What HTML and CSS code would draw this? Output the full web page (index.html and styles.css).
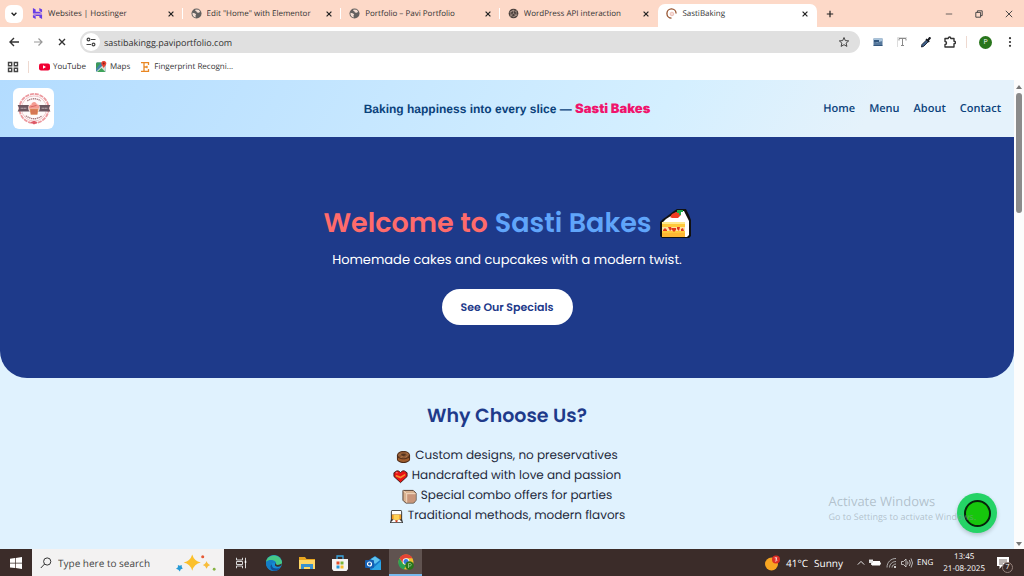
FILE: index.html
```html
<!DOCTYPE html>
<html lang="en">
<head>
    <meta charset="UTF-8">
    <meta name="viewport" content="width=device-width, initial-scale=1.0">
    <title>SastiBaking</title>
    <link rel="stylesheet" href="styles.css">
</head>
<body>
    <!-- Shared icon shapes -->
    <svg class="sprite" aria-hidden="true">
        <symbol id="close" viewBox="0 0 10 10"><path d="M2 2l6 6M8 2L2 8" fill="none" stroke="currentColor" stroke-width="1.5"/></symbol>
        <symbol id="globe" viewBox="0 0 12 12"><circle cx="6" cy="6" r="5.5" fill="#63605f"/><path d="M1.6 5.2L4 5.6l1.6 1.3-.7 1.2.3 2.3C2.7 9.9 1.3 8 1.6 5.2zM5 1.6l3.4.4L10 4 8.6 5.300 6.500 4.800 5.800 3.500 4.500 3z" fill="#f3ddd3"/></symbol>
    </svg>

    <!-- Tab strip -->
    <div class="tab-strip">
        <button class="tab-search" aria-label="Search tabs"><svg class="icon-s" viewBox="0 0 10 10"><path d="M2 3.500l3 3 3-3" fill="none" stroke="#222" stroke-width="1.700"/></svg></button>
        <div class="tabs">
            <div class="tab">
                <svg class="favicon" viewBox="0 0 12 12"><path d="M1 0l3 1.600v2.600h4L11 6H1zM8 0l3 1.600V5L8 3.400zM1 7h10v5L8 10.400V8.800H4.500zM1 7.500l3 1.600V12l-3-1.600z" fill="#673de6"/></svg>
                <span class="tab-title">Websites | Hostinger</span>
                <button class="tab-close" aria-label="Close tab"><svg class="icon-s"><use href="#close"/></svg></button>
            </div>
            <div class="tab">
                <svg class="favicon"><use href="#globe"/></svg>
                <span class="tab-title">Edit "Home" with Elementor</span>
                <button class="tab-close" aria-label="Close tab"><svg class="icon-s"><use href="#close"/></svg></button>
            </div>
            <div class="tab">
                <svg class="favicon"><use href="#globe"/></svg>
                <span class="tab-title">Portfolio – Pavi Portfolio</span>
                <button class="tab-close" aria-label="Close tab"><svg class="icon-s"><use href="#close"/></svg></button>
            </div>
            <div class="tab">
                <svg class="favicon" viewBox="0 0 12 12"><circle cx="6" cy="6" r="5.300" fill="#4a403c"/><g fill="none" stroke="#d9bfb3" stroke-width=".5"><path d="M6 2.500l3 1.700v3.600L6 9.500 3 7.800V4.200z"/><path d="M6 2.500V6l3 1.800M3 7.800L6 6M1.500 4.500L6 2.500M10.500 7.500L6 9.500M9 1.800v2.400M3 10.200V7.800"/></g></svg>
                <span class="tab-title">WordPress API interaction</span>
                <button class="tab-close" aria-label="Close tab"><svg class="icon-s"><use href="#close"/></svg></button>
            </div>
            <div class="tab active">
                <svg class="favicon" viewBox="0 0 12 12"><path d="M6 11A5 5 0 1 1 11 6" fill="none" stroke="#94502b" stroke-width="1.400"/><circle cx="6.500" cy="6.500" r="2" fill="#f6dcd6" stroke="#e5a79c" stroke-width=".7"/></svg>
                <span class="tab-title">SastiBaking</span>
                <button class="tab-close" aria-label="Close tab"><svg class="icon-s"><use href="#close"/></svg></button>
            </div>
        </div>
        <button class="new-tab" aria-label="New tab"><svg class="icon-s" viewBox="0 0 10 10"><path d="M5 1v8M1 5h8" stroke="#222" stroke-width="1.500"/></svg></button>
        <div class="window-controls">
            <button aria-label="Minimize"><svg class="icon-s" viewBox="0 0 10 10"><path d="M1 5h8" stroke="#444" stroke-width="1"/></svg></button>
            <button aria-label="Restore"><svg class="icon-s" viewBox="0 0 10 10"><path d="M1 3h6v6H1zM3 3V1h6v6H7" fill="none" stroke="#444" stroke-width="1.200"/></svg></button>
            <button aria-label="Close window"><svg class="icon-s" viewBox="0 0 10 10"><path d="M1 1l8 8M9 1L1 9" stroke="#444" stroke-width="1.200"/></svg></button>
        </div>
    </div>

    <!-- Toolbar -->
    <div class="toolbar">
        <button aria-label="Back"><svg class="icon-m" viewBox="0 0 12 12"><path d="M11 6H2M6 2L2 6l4 4" fill="none" stroke="#333" stroke-width="1.400"/></svg></button>
        <button aria-label="Forward"><svg class="icon-m" viewBox="0 0 12 12"><path d="M2 6h8M6.500 2.500L10 6 6.500 9.500" fill="none" stroke="#999" stroke-width="1.200"/></svg></button>
        <button aria-label="Stop loading"><svg class="icon-m" viewBox="0 0 12 12"><path d="M3 3l6 6M9 3L3 9" stroke="#333" stroke-width="1.400"/></svg></button>
        <div class="address-bar">
            <button class="site-info" aria-label="Site information"><svg class="icon-m" viewBox="0 0 12 12"><g fill="none" stroke="#444" stroke-width="1.200"><circle cx="3.500" cy="3.500" r="1.400"/><path d="M6 3.500h4.500M1.500 8.500H6"/><circle cx="8.500" cy="8.500" r="1.400"/></g></svg></button>
            <input class="url" type="text" value="sastibakingg.paviportfolio.com" aria-label="Address">
            <button class="star" aria-label="Bookmark this page"><svg class="icon-m" viewBox="0 0 12 12"><path d="M6 1.500l1.300 3.100 3.400.3-2.600 2.200.8 3.300L6 8.700l-2.900 1.700.8-3.300L1.300 4.900l3.400-.3z" fill="none" stroke="#444" stroke-width="1"/></svg></button>
        </div>
        <div class="extensions">
            <button aria-label="Screenshot extension"><svg class="icon-m" viewBox="0 0 12 12"><path d="M1.500 2.500h9v7h-9z" fill="#56789c"/><path d="M1.500 2.500h9V5L5 6.500 1.500 5z" fill="#a9c4dc"/><path d="M2 4h5v2H2zM1.500 9h9v1h-9z" fill="#33567d"/></svg></button>
            <button aria-label="Text extension"><svg class="icon-m" viewBox="0 0 12 12"><path d="M1.500 11V1.500H11" fill="none" stroke="#ddd"/><path d="M3 4.500v-2h7v2M6.500 2.500v7M5 9.500h3" fill="none" stroke="#8a8a8a"/></svg></button>
            <button aria-label="Color picker"><svg class="icon-m" viewBox="0 0 12 12"><path d="M1.500 11l.5-2.500 4.500-4.500 1.700 1.700L3.700 10.300z" fill="#3f628d" stroke="#1c2536"/><path d="M5.500 3.500l1-1 1 .7L9 1.200c1-.9 2.500.4 1.700 1.500L9 4.500l.7 1-1 1z" fill="#16191f"/></svg></button>
            <button aria-label="Extensions"><svg class="icon-m" viewBox="0 0 12 12"><path d="M1 2.500h3.200c0-2 2.600-2 2.600 0H10V5.200c2 0 2 2.600 0 2.600V11H1V8.500c2 0 2-3 0-3z" fill="none" stroke="#333" stroke-width="1.400" stroke-linejoin="round"/></svg></button>
        </div>
        <button class="profile" aria-label="Profile">P</button>
        <button aria-label="Browser menu"><svg class="icon-m" viewBox="0 0 12 12"><g fill="#333"><circle cx="6" cy="2.200" r="1.100"/><circle cx="6" cy="6" r="1.100"/><circle cx="6" cy="9.800" r="1.100"/></g></svg></button>
    </div>

    <!-- Bookmarks -->
    <div class="bookmarks">
        <button class="apps" aria-label="Apps"><svg class="icon-m" viewBox="0 0 12 12"><path d="M1.500 1.500h3.200v3.200H1.500zM7.300 1.500h3.200v3.200H7.300zM1.500 7.300h3.200v3.200H1.500zM7.300 7.300h3.200v3.200H7.300z" fill="none" stroke="#444" stroke-width="1.400"/></svg></button>
        <a href="#"><svg class="icon-m" viewBox="0 0 12 12"><rect x="1" y="2.500" width="11" height="7" rx="2" fill="#f00033"/><path d="M5 4.300v3.400L8 6z" fill="#fff"/></svg>YouTube</a>
        <a href="#"><svg class="icon-m" viewBox="0 0 12 12"><rect x="1" y="1.500" width="9.500" height="9.500" rx="1" fill="#4285a8"/><path d="M1 2.500l1-1h4L1 8z" fill="#3c9b57"/><path d="M1 11l8-8 1.500 2.500V10l-1 1z" fill="#d8ddd5"/><path d="M2 11l4.500-4 4 4z" fill="#3fa45b"/><path d="M8.700 0C6.600 0 5.600 2 6.600 3.800L8.700 7l2.200-3.200C12 2 10.800 0 8.700 0z" fill="#e94335"/><circle cx="8.700" cy="2.600" r="1" fill="#8d1c19"/></svg>Maps</a>
        <a href="#"><svg class="icon-m" viewBox="0 0 12 12"><path d="M2 1.700h7.500V4M5 1.700v8.600M2 10.300h7.500V8M5 6h3M8 4.700v2.600" fill="none" stroke="#e98723" stroke-width="1.300"/></svg>Fingerprint Recogni...</a>
    </div>

    <!-- Website -->
    <div class="viewport">
        <div class="page">
            <header class="site-header">
                <svg class="logo" viewBox="0 0 40 40" role="img" aria-label="Sasti Bakes logo">
                    <rect width="40" height="40" rx="6" fill="#fff"/>
                    <circle cx="20.500" cy="20" r="14.200" fill="none" stroke="#ec9a9f" stroke-width="1.800" stroke-dasharray="4 .8"/>
                    <circle cx="20.500" cy="20" r="12.300" fill="#fffafa" stroke="#e3a0a6" stroke-width=".6"/>
                    <path d="M14 12.500q6.500-4 13 0M12.500 27q8 6 16 0" fill="none" stroke="#a5787d" stroke-width="1.300" stroke-dasharray="1.300 .6"/>
                    <path d="M4.500 16.500h32l-1.500 3.300 1.500 3.200h-32L6 19.800z" fill="#6c5660"/>
                    <path d="M7.500 19.800h6M28 19.800h6" stroke="#d5c5c8" stroke-width="1" stroke-dasharray="1 .5"/>
                    <circle cx="20.500" cy="19.500" r="5.700" fill="#fff1eb"/>
                    <path d="M16 20h9l-1.200 6h-6.500z" fill="#de8c59"/>
                    <path d="M15.500 20c-.7-2.500 1.500-3.500 2.500-3.600.2-3.700 5-3.700 5.200-.2 2.200 0 3.300 2 2.300 3.900z" fill="#f59b91"/>
                    <path d="M17 18.500l6-1.500M18.500 21v4.500M20.500 21v4.500M22.500 21v4.500" stroke="#c9534c" stroke-width=".7"/>
                    <path d="M17 33.500l3.500-1.500 3.500 1.500-3.500 2z" fill="#dd5967"/>
                </svg>
                <div class="tagline">Baking happiness into every slice — <span class="brand">Sasti Bakes</span></div>
                <nav class="site-nav">
                    <a href="#">Home</a>
                    <a href="#">Menu</a>
                    <a href="#">About</a>
                    <a href="#">Contact</a>
                </nav>
            </header>

            <section class="hero">
                <h1><span class="welcome">Welcome to</span> <span class="name">Sasti Bakes</span>
                    <svg class="cake" viewBox="0 0 32 32" aria-hidden="true">
                        <path d="M1 14l3-3 3-2 4-3 4-3 3-2h9l3 6 2 5v16l-2 2H3l-2-2z" fill="#111"/>
                        <path d="M3 15l4-4 8-5 4-3h6l3 6 2 4v14l-2 2H3z" fill="#fff"/>
                        <path d="M3 15h23v14H3z" fill="#ffc93a"/>
                        <path d="M3 14h23v2H3z" fill="#ffe98c"/>
                        <path d="M3 19h23v4H3z" fill="#ffe3a0"/>
                        <path d="M4 22l2-2 2 2v1H4zM9 19h3l1 2-2 2zM13 20h4v2l-2 2-2-2zM18 19h3l-1 4-2-2zM22 21l2-1 1 3h-3z" fill="#e3381d"/>
                        <path d="M3 25h23v4H3z" fill="#ffb733"/>
                        <path d="M11 9l2-3 4-2h3l2 3-3 3h-6z" fill="#ef3b20"/>
                        <path d="M18 2h6v2h-2v3h-2V5h-2z" fill="#22a848"/>
                    </svg>
                </h1>
                <p>Homemade cakes and cupcakes with a modern twist.</p>
                <button class="specials">See Our Specials</button>
            </section>

            <section class="why">
                <h2>Why Choose Us?</h2>
                <ul>
                    <li><svg class="emoji" viewBox="0 0 16 16" aria-hidden="true"><path d="M1 7c0-3 3-5 7-5s7 2 7 5v4c0 2-3 4-7 4s-7-2-7-4z" fill="#4d2b17"/><path d="M2 9c3 2.500 9 2.500 12 0v2.500c-2 3-10 3-12 0z" fill="#9f5d2e"/><ellipse cx="8" cy="6.500" rx="6" ry="3.500" fill="#8c5733"/><ellipse cx="8" cy="6.200" rx="2.500" ry="1.200" fill="#54351f"/><path d="M3 7l2-2M11 4l2 2M5 9l2-1M10 9l2-2" stroke="#c08d55" stroke-width=".8"/></svg>Custom designs, no preservatives</li>
                    <li><svg class="emoji" viewBox="0 0 16 16" aria-hidden="true"><path d="M8 14.500L1 8V4l3-2h2l2 2 2-2h2l3 2v4z" fill="#e91313" stroke="#391713"/><path d="M3 6l5 2 5-3v2l-5 3-5-2z" fill="#f58a2a"/><path d="M3 4h2" stroke="#ff9391"/></svg>Handcrafted with love and passion</li>
                    <li><svg class="emoji" viewBox="0 0 16 16" aria-hidden="true"><path d="M1 1.500h11l3 3V12l-2.500 3H4l-3-3z" fill="#d9b391" stroke="#503c2e"/><path d="M5 5h9.500v7l-2.500 2.500H5z" fill="#c9967a"/><path d="M1.500 2l3.500 3h9.500M5 5v9.500" fill="none" stroke="#f3dcc4"/></svg>Special combo offers for parties</li>
                    <li><svg class="emoji" viewBox="0 0 16 16" aria-hidden="true"><path d="M3 1h10l1 2v8l1 4H1l1-4V3z" fill="#333"/><path d="M3 2h10v4H3z" fill="#fff"/><path d="M3 6h10v5H3z" fill="#ef9b26"/><path d="M5 6h6v5l-3 2-3-2z" fill="#ffd255"/><path d="M2 14l3-3 3 2 3-2 3 3z" fill="#fff"/><path d="M7 12h2v2H7z" fill="#d33b26"/></svg>Traditional methods, modern flavors</li>
                </ul>
            </section>

            <button class="chat" aria-label="Chat with us"></button>
        </div>
        <div class="scrollbar">
            <span class="arrow up"></span>
            <span class="thumb"></span>
            <span class="arrow down"></span>
        </div>
        <div class="watermark">
            <div class="watermark-title">Activate Windows</div>
            <div>Go to Settings to activate Windows.</div>
        </div>
    </div>

    <!-- Taskbar -->
    <div class="taskbar">
        <button class="start" aria-label="Start"><svg class="icon-m" viewBox="0 0 12 12"><path d="M0 1.700L5 1v4.700H0zM5.700.9L12 0v5.700H5.700zM0 6.400h5v4.700l-5-.7zM5.700 6.400H12V12l-6.300-.9z" fill="#fff"/></svg></button>
        <label class="search">
            <svg class="icon-m" viewBox="0 0 12 12"><circle cx="7.200" cy="4.500" r="3.600" fill="none" stroke="#333"/><path d="M4.600 7L.8 11" stroke="#333"/></svg>
            <input type="text" placeholder="Type here to search" aria-label="Search">
            <svg class="sparkles" viewBox="0 0 44 20" aria-hidden="true">
                <path d="M17 1q2 7 9 8.500-7 1.500-9 8.500-2-7-9-8.500 7-1.500 9-8.500z" fill="#fbc02b"/>
                <path d="M32 8q1 3.500 4 4-3 .8-4 4-1-3.200-4-4 3-.5 4-4z" fill="#f8bd3b"/>
                <path d="M2 12l2 1 2-1v2l1 2-2 .5L4 19l-1.500-2L0 16l2-1.500z" fill="#269ad6"/>
                <circle cx="28" cy="3.500" r="1.600" fill="#e65a35"/><circle cx="40" cy="16.500" r="1.500" fill="#88b344"/>
            </svg>
        </label>
        <div class="apps-row">
            <button aria-label="Task view"><svg class="icon-m" viewBox="0 0 16 16"><path d="M2 1v3h8V1M2 15v-3h8v3M2 6h8v4H2zM14 1v14" fill="none" stroke="#ddd" stroke-width="1.300"/><path d="M13 5h2v3h-2z" fill="#fff"/></svg></button>
            <button aria-label="Edge"><svg class="icon-l" viewBox="0 0 16 16"><circle cx="8" cy="8" r="8" fill="#168bd5"/><path d="M0 7C1-1 14-2 16 7c.5 5-6 5-6 2 1-4-6-5-10-2z" fill="#45c987"/><path d="M0 7c4-4 10-1 10 1.500C5.500 6 3 11 8 16 2 16-.5 11 0 7z" fill="#147ec5"/><path d="M6 9c-1 4 4 6 8.500 3.500C11 18 4 16 4.500 11z" fill="#114e99"/><path d="M9 7.500c1 3 3 3 7 1-1 4-5 4-7 2z" fill="#3b3030"/></svg></button>
            <button aria-label="File Explorer"><svg class="icon-l" viewBox="0 0 16 16"><path d="M0 2h6l1.500 2H16v10H0z" fill="#e8a620"/><path d="M0 5h16v9H0z" fill="#ffd766"/><path d="M2 9h12v5h-3v-2H5v2H2z" fill="#3a92cf"/></svg></button>
            <button aria-label="Microsoft Store"><svg class="icon-l" viewBox="0 0 16 16"><path d="M5 4V1h6v3" fill="none" stroke="#3ca6df" stroke-width="1.300"/><path d="M0 4h16v10l-1.500 2h-13L0 14z" fill="#f4f4f4"/><path d="M4.500 6.500h3v3h-3z" fill="#e34e2b"/><path d="M8.500 6.500h3v3h-3z" fill="#7bb637"/><path d="M4.500 10.500h3v3h-3z" fill="#2498da"/><path d="M8.500 10.500h3v3h-3z" fill="#f7bd2b"/></svg></button>
            <button aria-label="Outlook"><svg class="icon-l" viewBox="0 0 16 16"><path d="M4 5l6-4 6 4v9l-2 1H5z" fill="#1478c9"/><path d="M6 4l4-2.500L15 5l-5 4z" fill="#5fc3ee"/><path d="M16 6v9H6z" fill="#2ca5e5"/><rect y="5" width="9" height="8" rx="1" fill="#145fb2"/><circle cx="4.500" cy="9" r="2" fill="none" stroke="#fff" stroke-width="1.200"/></svg></button>
            <button class="running" aria-label="Chrome"><svg class="icon-l" viewBox="0 0 16 16"><circle cx="8" cy="8" r="7.500" fill="#f2c02e"/><path d="M1.500 4.300C4-1 12-1 14.500 4.300H8L5 9z" fill="#e54335"/><path d="M1.500 4.300L5 10l3 1-2 4.400C0 14-.8 8 1.500 4.300z" fill="#2aa253"/><circle cx="8" cy="7.500" r="3.300" fill="#fff"/><circle cx="8" cy="7.500" r="2.500" fill="#3878de"/><circle cx="11.500" cy="11.500" r="4.300" fill="#28751c"/><path d="M10.500 14V9.500h1.300c2 0 2 2.500 0 2.500h-1.300" fill="none" stroke="#b4d9a4" stroke-width=".7"/></svg></button>
        </div>
        <div class="tray">
            <button class="weather"><svg class="icon-l" viewBox="0 0 16 16"><circle cx="7.500" cy="9" r="6.500" fill="#f7a522"/><path d="M2 7a6.500 6.500 0 0 0 10 6.700A6.500 6.500 0 0 1 2 7z" fill="#fbc64e"/><circle cx="12" cy="4.500" r="4" fill="#dd2e25"/><path d="M10.700 2.800h2.200L11.800 4.300c1.800 0 1.500 2.200-.9 1.700" fill="none" stroke="#fff" stroke-width=".8"/></svg><span>41°C</span><span>Sunny</span></button>
            <button aria-label="Show hidden icons"><svg class="icon-s" viewBox="0 0 10 10"><path d="M1 7l4-4 4 4" fill="none" stroke="#eee" stroke-width="1.200"/></svg></button>
            <button aria-label="Battery"><svg class="icon-m" viewBox="0 0 12 12"><path d="M3 4h8v4.500H3z" fill="#fff"/><path d="M11 5.500h1v2h-1zM0 3h4v3H3v2H2V6H0z" fill="#ddd"/><path d="M1 2v2M3 2v2" stroke="#fff" stroke-width=".8"/></svg></button>
            <button aria-label="Network"><svg class="icon-m" viewBox="0 0 12 12"><g fill="none" stroke="#bbb" stroke-width=".9"><path d="M2 10.500C2 5 6 1.500 11 1.500M4.500 10.500c0-3.500 3-6 6.500-6M7 10.500c0-2 2-3.500 4-3.500"/></g><circle cx="10" cy="10" r="1" fill="#fff"/></svg></button>
            <button aria-label="Volume"><svg class="icon-m" viewBox="0 0 12 12"><path d="M.5 4.500h2L5 2v8L2.500 7.500h-2zM6.500 4.500q1 1.500 0 3M8.300 3q2 3 0 6M10 1.500q3 4.500 0 9" fill="none" stroke="#ddd" stroke-width=".8"/></svg></button>
            <button>ENG</button>
            <button class="clock"><span>13:45</span><span>21-08-2025</span></button>
            <button class="notifications" aria-label="Notifications, 7 new"><svg class="icon-m" viewBox="0 0 12 12"><path d="M0 0h12v9H5l-2.500 3V9H0z" fill="#fff"/><path d="M2 3h8M2 5h8M2 7h4" stroke="#51423e" stroke-width=".8"/></svg><span class="badge">7</span></button>
        </div>
    </div>
</body>
</html>
```
FILE: styles.css
```css
* {
    box-sizing: border-box;
}
body {
    margin: 0;
    height: 100vh;
    display: flex;
    flex-direction: column;
    overflow: hidden;
    background: #fff;
    color: #333;
    font-family: "Segoe UI", "Open Sans", sans-serif;
    font-size: 8px;
    text-rendering: geometricPrecision;
}
button, input {
    border: none;
    padding: 0;
    background: none;
    color: inherit;
    font: inherit;
    text-rendering: inherit;
}
button {
    display: flex;
    align-items: center;
    justify-content: center;
    cursor: pointer;
}
a {
    color: inherit;
    text-decoration: none;
}
svg {
    display: block;
    flex: none;
}
.sprite {
    position: absolute;
    width: 0;
    height: 0;
}
.icon-s {
    width: 8px;
    height: 8px;
}
.icon-m {
    width: 12px;
    height: 12px;
}
.icon-l {
    width: 16px;
    height: 16px;
}

/* Tab strip */
.tab-strip {
    display: flex;
    align-items: center;
    height: 27px;
    padding-left: 5px;
    background: #fdd9c8;
}
.tab-search {
    width: 18px;
    height: 18px;
    border-radius: 6px;
    background: #fff;
}
.tabs {
    display: flex;
    flex: 0 1 794px;
    align-self: stretch;
    padding-left: 1px;
    min-width: 0;
}
.tab {
    display: flex;
    flex: 1;
    align-items: center;
    gap: 5px;
    min-width: 0;
    padding: 0 8px;
}
.tab:nth-child(-n+3) {
    background: linear-gradient(#fff, #fff) right center / 1px 11px no-repeat;
}
.tab.active {
    align-self: flex-end;
    height: 23px;
    padding-bottom: 4px;
    border-radius: 7px 7px 0 0;
    background: #fff;
}
.favicon {
    width: 11px;
    height: 11px;
}
.tab-title {
    flex: 1;
    overflow: hidden;
    white-space: nowrap;
}
.tab-close {
    color: #222;
}
.new-tab {
    width: 20px;
    height: 20px;
    margin-left: 3px;
}
.window-controls {
    display: flex;
    margin-left: auto;
}
.window-controls button {
    width: 30px;
    height: 26px;
}

/* Toolbar */
.toolbar {
    display: flex;
    align-items: center;
    height: 30px;
    padding: 0 8px;
    gap: 12px;
}
.address-bar {
    display: flex;
    flex: 1;
    align-items: center;
    height: 22px;
    padding: 0 10px 0 2px;
    border-radius: 11px;
    background: #e0e0e0;
}
.site-info {
    width: 18px;
    height: 18px;
    border-radius: 50%;
    background: #fff;
}
.url {
    flex: 1;
    min-width: 0;
    padding-left: 4px;
    font-size: 9px;
}
.extensions {
    display: flex;
    gap: 12px;
    padding-right: 10px;
    border-right: 1px solid #eed9d0;
}
.profile {
    width: 13px;
    height: 13px;
    border-radius: 50%;
    background: #28751c;
    color: #fff;
    font-size: 7px;
}

/* Bookmarks */
.bookmarks {
    display: flex;
    align-items: center;
    gap: 9px;
    height: 23px;
    padding: 0 7px 4px;
}
.bookmarks a {
    display: flex;
    align-items: center;
    gap: 3px;
}
.bookmarks .apps {
    padding-right: 9px;
    border-right: 1px solid #eed9d0;
}

/* Website */
.viewport {
    position: relative;
    display: flex;
    flex: 1;
    min-height: 0;
}
.page {
    position: relative;
    flex: 1;
    overflow: hidden;
    background: #e0f2fe;
    font-family: "Poppins", "Inter", sans-serif;
}
.site-header {
    display: grid;
    grid-template-columns: 1fr auto 1fr;
    align-items: center;
    padding: 8px 13px;
    background: linear-gradient(120deg, #b3dcff, #d4efff 65%, #e5f2fb 85%);
}
.logo {
    width: 41px;
    height: 41px;
}
.tagline {
    color: #0b427b;
    font-family: "Liberation Sans", Arial, sans-serif;
    font-size: 12px;
    font-weight: bold;
    line-height: 16px;
}
.brand {
    color: #f0146c;
    font-family: "Arial Black", "Inter", sans-serif;
    font-size: 13px;
    font-weight: 900;
}
.site-nav {
    display: flex;
    justify-content: flex-end;
    gap: 14px;
    color: #0b427b;
    font-family: "Segoe UI", "Open Sans", sans-serif;
    font-size: 11px;
    font-weight: 600;
}
.hero {
    display: flex;
    flex-direction: column;
    align-items: center;
    padding: 66px 20px 53px;
    border-radius: 0 0 27px 27px;
    background: #1e3a8a;
    color: #fff;
}
.hero h1 {
    display: flex;
    align-items: center;
    gap: 7px;
    margin: 0;
    font-size: 27px;
    font-weight: 600;
    line-height: 42px;
}
.welcome {
    color: #ff6b6b;
}
.name {
    color: #60a5fa;
}
.cake {
    width: 32px;
    height: 32px;
}
.hero p {
    margin: 3px 0 17px;
    font-size: 13px;
    line-height: 24px;
}
.specials {
    height: 36px;
    padding: 0 19px;
    border-radius: 18px;
    background: #fff;
    color: #1e3a8a;
    font-size: 11px;
    font-weight: 600;
}
.why {
    padding: 23px 20px;
    text-align: center;
}
.why h2 {
    margin: 0 0 15px;
    color: #1e3a8a;
    font-size: 19px;
    font-weight: 600;
    line-height: 30px;
}
.why ul {
    margin: 0;
    padding: 0;
    list-style: none;
    color: #1e293b;
    font-size: 12px;
}
.why li {
    display: flex;
    align-items: center;
    justify-content: center;
    gap: 4px;
    line-height: 20px;
}
.emoji {
    width: 15px;
    height: 15px;
}
.chat {
    position: absolute;
    right: 17px;
    bottom: 16px;
    width: 40px;
    height: 40px;
    border-radius: 50%;
    background: #25d366;
    box-shadow: 0 2px 4px rgba(0, 0, 0, 0.2);
}
.chat::before {
    content: "";
    width: 23px;
    height: 23px;
    border: 2px solid #07230a;
    border-radius: 50%;
    background: #16c60c;
}
.scrollbar {
    display: flex;
    flex-direction: column;
    align-items: center;
    width: 10px;
    padding: 5px 0 3px;
    background: #fcfcfc;
}
.arrow {
    border: 3px solid transparent;
}
.up {
    border-top: none;
    border-bottom: 4px solid #777;
}
.down {
    margin-top: auto;
    border-top: 4px solid #777;
    border-bottom: none;
}
.thumb {
    width: 6px;
    height: 26%;
    margin-top: 4px;
    border-radius: 3px;
    background: #8b8b8b;
}
.watermark {
    position: absolute;
    right: 48px;
    bottom: 25px;
    color: rgba(140, 152, 162, 0.55);
    font-size: 9px;
    line-height: 14px;
    pointer-events: none;
}
.watermark-title {
    font-size: 13px;
    line-height: 18px;
}

/* Taskbar */
.taskbar {
    display: flex;
    height: 27px;
    background: #3b2c29;
    color: #fff;
    font-size: 10px;
}
.start {
    width: 32px;
}
.search {
    display: flex;
    flex: 0 1 192px;
    align-items: center;
    gap: 6px;
    min-width: 0;
    padding: 0 6px 0 8px;
    background: #f3f2f2;
    color: #333;
}
.search input {
    flex: 1;
    width: 0;
    min-width: 0;
}
.search input::placeholder {
    color: #444;
    opacity: 1;
}
.sparkles {
    width: 42px;
    height: 20px;
}
.apps-row {
    display: flex;
}
.apps-row button {
    width: 33px;
}
.apps-row .running {
    border-bottom: 2px solid #76b9ed;
    background: #605350;
}
.tray {
    display: flex;
    gap: 4px;
    margin-left: auto;
    padding-right: 11px;
    font-size: 8px;
}
.weather {
    gap: 6px;
    margin-right: 10px;
    font-size: 10px;
}
.clock {
    flex-direction: column;
    margin: 0 8px 0 6px;
    line-height: 12px;
}
.notifications {
    position: relative;
    width: 16px;
    justify-content: flex-start;
}
.badge {
    position: absolute;
    right: 0;
    bottom: 3px;
    width: 11px;
    height: 11px;
    border: 1px solid #96837d;
    border-radius: 50%;
    background: #3b2c29;
    font-size: 7px;
    line-height: 9px;
}
```
